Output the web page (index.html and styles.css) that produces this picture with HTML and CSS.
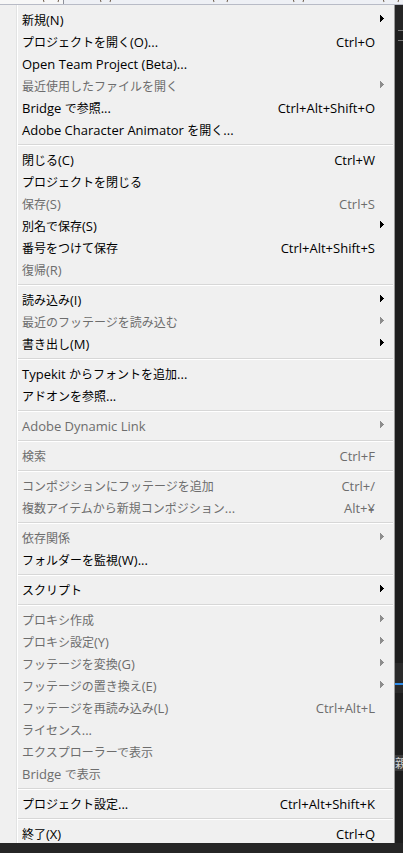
FILE: index.html
```html
<!DOCTYPE html>
<html lang="ja">
<head>
<meta charset="utf-8">
<link rel="stylesheet" href="styles.css">
</head>
<body>
<div class="screen">
  <div class="menubar">
    <div class="mb-sel"><span class="pm pm-a"></span></div>
    <span class="pm pm-b"></span>
    <span class="pm pm-c"></span>
    <span class="pm pm-d"></span>
    <span class="pm pm-e"></span>
  </div>
  <div class="main">
    <div class="menu">
      <div class="item"><span class="label"><span class="j">新規</span>(N)</span><span class="key"></span><svg class="arrow" width="5" height="22"><path d="M0 6h1v7H0zM1 7h1v5H1zM2 8h1v3H2zM3 9h1v1H3z"/></svg></div>
      <div class="item"><span class="label"><span class="j">プロジェクトを開く</span>(O)...</span><span class="key">Ctrl+O</span><span class="noarrow"></span></div>
      <div class="item"><span class="label">Open Team Project (Beta)...</span><span class="key"></span><span class="noarrow"></span></div>
      <div class="item off"><span class="label"><span class="j">最近使用したファイルを開く</span></span><span class="key"></span><svg class="arrow" width="5" height="22"><path d="M0 6h1v7H0zM1 7h1v5H1zM2 8h1v3H2zM3 9h1v1H3z"/></svg></div>
      <div class="item"><span class="label">Bridge <span class="j">で参照</span>...</span><span class="key">Ctrl+Alt+Shift+O</span><span class="noarrow"></span></div>
      <div class="item"><span class="label">Adobe Character Animator <span class="j">を開く</span>...</span><span class="key"></span><span class="noarrow"></span></div>
      <div class="sep"></div>
      <div class="item"><span class="label"><span class="j">閉じる</span>(C)</span><span class="key">Ctrl+W</span><span class="noarrow"></span></div>
      <div class="item"><span class="label"><span class="j">プロジェクトを閉じる</span></span><span class="key"></span><span class="noarrow"></span></div>
      <div class="item off"><span class="label"><span class="j">保存</span>(S)</span><span class="key">Ctrl+S</span><span class="noarrow"></span></div>
      <div class="item"><span class="label"><span class="j">別名で保存</span>(S)</span><span class="key"></span><svg class="arrow" width="5" height="22"><path d="M0 6h1v7H0zM1 7h1v5H1zM2 8h1v3H2zM3 9h1v1H3z"/></svg></div>
      <div class="item"><span class="label"><span class="j">番号をつけて保存</span></span><span class="key">Ctrl+Alt+Shift+S</span><span class="noarrow"></span></div>
      <div class="item off"><span class="label"><span class="j">復帰</span>(R)</span><span class="key"></span><span class="noarrow"></span></div>
      <div class="sep"></div>
      <div class="item"><span class="label"><span class="j">読み込み</span>(I)</span><span class="key"></span><svg class="arrow" width="5" height="22"><path d="M0 6h1v7H0zM1 7h1v5H1zM2 8h1v3H2zM3 9h1v1H3z"/></svg></div>
      <div class="item off"><span class="label"><span class="j">最近のフッテージを読み込む</span></span><span class="key"></span><svg class="arrow" width="5" height="22"><path d="M0 6h1v7H0zM1 7h1v5H1zM2 8h1v3H2zM3 9h1v1H3z"/></svg></div>
      <div class="item"><span class="label"><span class="j">書き出し</span>(M)</span><span class="key"></span><svg class="arrow" width="5" height="22"><path d="M0 6h1v7H0zM1 7h1v5H1zM2 8h1v3H2zM3 9h1v1H3z"/></svg></div>
      <div class="sep"></div>
      <div class="item"><span class="label">Typekit <span class="j">からフォントを追加</span>...</span><span class="key"></span><span class="noarrow"></span></div>
      <div class="item"><span class="label"><span class="j">アドオンを参照</span>...</span><span class="key"></span><span class="noarrow"></span></div>
      <div class="sep"></div>
      <div class="item off"><span class="label">Adobe Dynamic Link</span><span class="key"></span><svg class="arrow" width="5" height="22"><path d="M0 6h1v7H0zM1 7h1v5H1zM2 8h1v3H2zM3 9h1v1H3z"/></svg></div>
      <div class="sep"></div>
      <div class="item off"><span class="label"><span class="j">検索</span></span><span class="key">Ctrl+F</span><span class="noarrow"></span></div>
      <div class="sep"></div>
      <div class="item off"><span class="label"><span class="j">コンポジションにフッテージを追加</span></span><span class="key">Ctrl+/</span><span class="noarrow"></span></div>
      <div class="item off"><span class="label"><span class="j">複数アイテムから新規コンポジション</span>...</span><span class="key">Alt+¥</span><span class="noarrow"></span></div>
      <div class="sep"></div>
      <div class="item off"><span class="label"><span class="j">依存関係</span></span><span class="key"></span><svg class="arrow" width="5" height="22"><path d="M0 6h1v7H0zM1 7h1v5H1zM2 8h1v3H2zM3 9h1v1H3z"/></svg></div>
      <div class="item"><span class="label"><span class="j">フォルダーを監視</span>(W)...</span><span class="key"></span><span class="noarrow"></span></div>
      <div class="sep"></div>
      <div class="item"><span class="label"><span class="j">スクリプト</span></span><span class="key"></span><svg class="arrow" width="5" height="22"><path d="M0 6h1v7H0zM1 7h1v5H1zM2 8h1v3H2zM3 9h1v1H3z"/></svg></div>
      <div class="sep"></div>
      <div class="item off"><span class="label"><span class="j">プロキシ作成</span></span><span class="key"></span><svg class="arrow" width="5" height="22"><path d="M0 6h1v7H0zM1 7h1v5H1zM2 8h1v3H2zM3 9h1v1H3z"/></svg></div>
      <div class="item off"><span class="label"><span class="j">プロキシ設定</span>(Y)</span><span class="key"></span><svg class="arrow" width="5" height="22"><path d="M0 6h1v7H0zM1 7h1v5H1zM2 8h1v3H2zM3 9h1v1H3z"/></svg></div>
      <div class="item off"><span class="label"><span class="j">フッテージを変換</span>(G)</span><span class="key"></span><svg class="arrow" width="5" height="22"><path d="M0 6h1v7H0zM1 7h1v5H1zM2 8h1v3H2zM3 9h1v1H3z"/></svg></div>
      <div class="item off"><span class="label"><span class="j">フッテージの置き換え</span>(E)</span><span class="key"></span><svg class="arrow" width="5" height="22"><path d="M0 6h1v7H0zM1 7h1v5H1zM2 8h1v3H2zM3 9h1v1H3z"/></svg></div>
      <div class="item off"><span class="label"><span class="j">フッテージを再読み込み</span>(L)</span><span class="key">Ctrl+Alt+L</span><span class="noarrow"></span></div>
      <div class="item off"><span class="label"><span class="j">ライセンス</span>...</span><span class="key"></span><span class="noarrow"></span></div>
      <div class="item off"><span class="label"><span class="j">エクスプローラーで表示</span></span><span class="key"></span><span class="noarrow"></span></div>
      <div class="item off"><span class="label">Bridge <span class="j">で表示</span></span><span class="key"></span><span class="noarrow"></span></div>
      <div class="sep"></div>
      <div class="item"><span class="label"><span class="j">プロジェクト設定</span>...</span><span class="key">Ctrl+Alt+Shift+K</span><span class="noarrow"></span></div>
      <div class="sep"></div>
      <div class="item"><span class="label"><span class="j">終了</span>(X)</span><span class="key">Ctrl+Q</span><span class="noarrow"></span></div>
    </div>
    <div class="side">
      <div class="side-top"></div>
      <div class="side-line"></div>
      <div class="side-gap"></div>
      <div class="side-line"></div>
      <div class="side-fill"></div>
      <div class="side-band"><div class="side-blue"></div></div>
      <div class="side-fill2"></div>
      <div class="side-tab">親</div>
      <div class="side-rest"></div>
    </div>
  </div>
  <div class="footer"></div>
</div>
</body>
</html>
```

FILE: styles.css
```css
* { box-sizing: border-box; }
html, body { margin: 0; padding: 0; }
body {
  background: #232323;
  font-family: "Open Sans", "Noto Sans CJK JP", sans-serif;
  font-size: 13px;
  width: 403px;
  height: 853px;
  overflow: hidden;
}
.screen { display: flex; flex-direction: column; width: 403px; height: 853px; }

.menubar {
  display: flex;
  align-items: flex-start;
  height: 5px;
  overflow: hidden;
  background: #eef0f5;
  border-bottom: 1px solid #b8bbc6;
  flex: none;
}
.mb-sel {
  width: 64px;
  height: 4px;
  background: #f7f7f7;
  border-right: 1px solid #8e909a;
  padding-left: 43px;
  flex: none;
}
.pm {
  display: block;
  height: 3px;
  border: 1px solid #6e5c4c;
  border-top: none;
  border-radius: 0 0 3px 3px;
  border-bottom-color: transparent;
  flex: none;
}
.pm-a { width: 16px; }
.pm-b { width: 11px; margin-left: 36px; }
.pm-c { width: 15px; margin-left: 102px; }
.pm-d { width: 11px; margin-left: 65px; }
.pm-e { width: 16px; margin-left: 79px; }

.main { display: flex; flex: none; height: 838px; }

.menu {
  width: 395px;
  height: 838px;
  overflow: hidden;
  background: #f0f0f0;
  border-right: 1px solid #9a9a9a;
  padding-top: 4px;
  background-image: linear-gradient(to right, transparent 16px, #e2e3e3 16px, #e2e3e3 17px, #ffffff 17px, #ffffff 18px, transparent 18px);
  flex: none;
}
.item {
  display: flex;
  align-items: center;
  height: 22px;
  flex: none;
  padding-left: 22px;
  color: #000;
  white-space: nowrap;
  line-height: 22px;
}
.item.off { color: #6d6d6d; }
.j { font-family: "Noto Sans CJK JP", sans-serif; font-size: 12px; }
.label { flex: 1; }
.key { text-align: right; }
.arrow { width: 19px; height: 22px; padding-left: 5px; fill: #000; flex: none; }
.item.off .arrow { fill: #8d8d8d; }
.noarrow { width: 19px; flex: none; }
.sep {
  height: 8px;
  flex: none;
  margin-left: 18px;
  margin-right: 1px;
  display: flex;
  flex-direction: column;
  justify-content: center;
}
.sep::before {
  content: "";
  display: block;
  height: 1px;
  background: #d7d7d7;
}
.sep::after {
  content: "";
  display: block;
  height: 1px;
  background: #ffffff;
}

.side { width: 8px; flex: none; display: flex; flex-direction: column; background: #1e1e1e; }
.side-top { height: 25px; background: #262626; }
.side-line { height: 1px; background: #7a7a7a; margin-left: 3px; }
.side-gap { height: 9px; }
.side-fill { height: 622px; }
.side-band { height: 30px; background: #2a2a2a; display: flex; flex-direction: column; justify-content: flex-end; padding-bottom: 8px; }
.side-blue { height: 2px; background: #2d8ceb; }
.side-fill2 { height: 62px; }
.side-tab { height: 16px; background: #3b3b3b; color: #cfcfcf; font-family: "Noto Sans CJK JP", sans-serif; font-size: 12px; line-height: 16px; overflow: hidden; }
.side-rest { flex: 1; }

.footer { flex: 1; background: #262626; }
```
